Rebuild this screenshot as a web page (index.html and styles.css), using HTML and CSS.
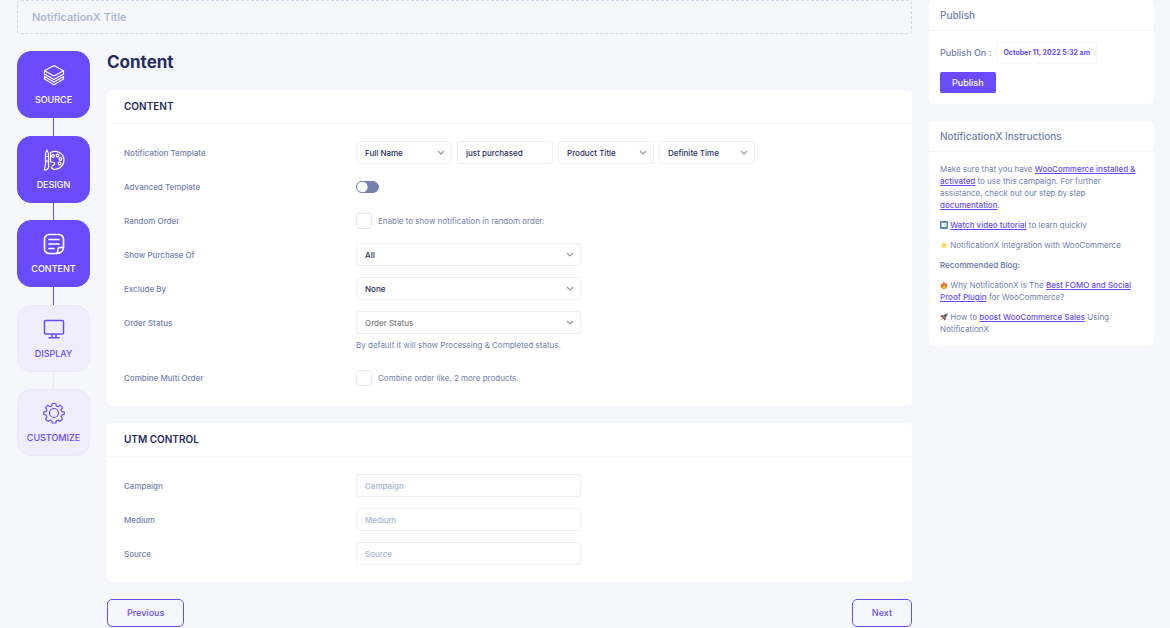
FILE: index.html
```html
<!DOCTYPE html>
<html lang="en">
<head>
<meta charset="utf-8">
<title>NotificationX</title>
<meta name="viewport" content="width=device-width, initial-scale=1">
<link rel="stylesheet" href="styles.css">
</head>
<body>
<div class="page">
  <main class="main">
    <input class="title-input" type="text" placeholder="NotificationX Title" aria-label="NotificationX Title">
    <div class="builder">
      <nav class="steps" aria-label="Steps">
        <button class="step done" type="button">
          <svg class="step-icon" viewBox="0 0 22 22"><path d="M11 1.500 20.500 6.800 11 12 1.500 6.800Z"/><path d="M1.500 6.800v3.200L11 15.500l9.500-5.500v-3.200M1.500 10v1M1.500 12.500 11 18l9.500-5.500M1.500 12.500v2.600L11 20.700l9.500-5.600v-2.600"/></svg>
          <span>SOURCE</span>
        </button>
        <span class="link done"></span>
        <button class="step done" type="button">
          <svg class="step-icon" viewBox="0 0 22 22"><path d="M4 1C2.500 3 2.300 5 2.500 7.500h3C5.700 5 5.300 3 4 1ZM2.500 7.500h3V12h-3ZM2.800 12h2.400l.5 5c.3 2.500-1.500 4-4.700 4 1-1 1-2.500 1.200-4Z"/><path d="M7.500 3.500C14 .5 21 4.500 21 11c0 5.500-4.500 9.500-9.500 9.300-2 0-3-.8-2.800-2.300.3-2 3.300-1.500 3-3.500-.2-1.800-2.200-1.500-4.200-1.500Z"/><circle cx="10" cy="7" r="1.300"/><circle cx="14.500" cy="6.500" r="1.300"/><circle cx="17.500" cy="10" r="1.300"/><circle cx="16.500" cy="14.500" r="1.300"/></svg>
          <span>DESIGN</span>
        </button>
        <span class="link done"></span>
        <button class="step done" type="button" aria-current="step">
          <svg class="step-icon bold" viewBox="0 0 22 22"><path d="M13.500 20.500H6a4.500 4.500 0 0 1-4.500-4.500V6A4.500 4.500 0 0 1 6 1.500h10A4.500 4.500 0 0 1 20.500 6v8.500c0 3.500-3 6-7 6ZM14 20.300c1.300-1.300 0-4.800 2-5.600 1.500-.6 3 .3 4.400-.6M6 6.500h10M6 11h10M6 15.500h5"/></svg>
          <span>CONTENT</span>
        </button>
        <span class="link done"></span>
        <button class="step" type="button">
          <svg class="step-icon medium" viewBox="0 0 22 22"><path d="M2.500 2.500h17a1 1 0 0 1 1 1v11.500a1 1 0 0 1-1 1h-17a1 1 0 0 1-1-1V3.500a1 1 0 0 1 1-1ZM9 16v3.500M13 16v3.500M6 19.700h10"/></svg>
          <span>DISPLAY</span>
        </button>
        <span class="link"></span>
        <button class="step" type="button">
          <svg class="step-icon" viewBox="0 0 22 22"><circle cx="11" cy="11" r="4.500"/><path d="M9.200 1.500h3.600l.5 2.500 1.600.7 2.200-1.500 2.400 2.400-1.400 2.200.7 1.700 2.400.4v2.600l-2.400.6-.7 1.700 1.400 2.200-2.400 2.400-2.200-1.400-1.600.7-.5 2.300H9.200l-.5-2.300-1.600-.7-2.200 1.400-2.400-2.400 1.400-2.200-.7-1.700-2.400-.6V9.900l2.400-.4.7-1.700-1.400-2.200 2.400-2.400 2.200 1.500L8.700 4Z"/></svg>
          <span>CUSTOMIZE</span>
        </button>
      </nav>

      <form class="panel">
        <h1>Content</h1>
        <section class="card">
          <h2>CONTENT</h2>
          <div class="fields">
            <div class="row">
              <label for="template">Notification Template</label>
              <div class="inline">
                <select id="template"><option>Full Name</option></select>
                <input type="text" value="just purchased" aria-label="Action text">
                <select aria-label="Product"><option>Product Title</option></select>
                <select aria-label="Time"><option>Definite Time</option></select>
              </div>
            </div>
            <div class="row">
              <label for="advanced">Advanced Template</label>
              <input class="switch" id="advanced" type="checkbox" role="switch">
            </div>
            <div class="row">
              <span>Random Order</span>
              <label class="check"><input type="checkbox"> Enable to show notification in random order.</label>
            </div>
            <div class="row">
              <label for="purchase">Show Purchase Of</label>
              <select id="purchase"><option>All</option></select>
            </div>
            <div class="row">
              <label for="exclude">Exclude By</label>
              <select id="exclude"><option>None</option></select>
            </div>
            <div class="row">
              <label for="status">Order Status</label>
              <select class="empty" id="status" aria-describedby="status-hint"><option>Order Status</option></select>
              <p class="hint" id="status-hint">By default it will show Processing &amp; Completed status.</p>
            </div>
            <div class="row">
              <span>Combine Multi Order</span>
              <label class="check"><input type="checkbox"> Combine order like, 2 more products.</label>
            </div>
          </div>
        </section>

        <section class="card">
          <h2>UTM CONTROL</h2>
          <div class="fields">
            <div class="row">
              <label for="campaign">Campaign</label>
              <input id="campaign" type="text" placeholder="Campaign">
            </div>
            <div class="row">
              <label for="medium">Medium</label>
              <input id="medium" type="text" placeholder="Medium">
            </div>
            <div class="row">
              <label for="source">Source</label>
              <input id="source" type="text" placeholder="Source">
            </div>
          </div>
        </section>

        <div class="pager">
          <button class="outline" type="button">Previous</button>
          <button class="outline" type="button">Next</button>
        </div>
      </form>
    </div>
  </main>

  <aside class="sidebar">
    <section class="card side">
      <h2>Publish</h2>
      <div class="publish">
        <div class="publish-on">Publish On : <button class="date" type="button">October 11, 2022 5:32 am</button></div>
        <button class="primary" type="button">Publish</button>
      </div>
    </section>
    <section class="card side">
      <h2>NotificationX Instructions</h2>
      <div class="help">
        <p>Make sure that you have <a href="#">WooCommerce installed &amp; activated</a> to use this campaign. For further assistance, check out our step by step <a href="#">documentation</a>.</p>
        <p><svg class="emoji" viewBox="0 0 16 16"><rect width="16" height="16" rx="2" fill="#5b8ba5"/><rect x="3" y="4" width="10" height="8" rx="1" fill="#eaf4f9"/><path d="M5 2v3M8 6l3 2-3 2Z" fill="#5b8ba5" stroke="#fff"/></svg> <a href="#">Watch video tutorial</a> to learn quickly</p>
        <p><svg class="emoji" viewBox="0 0 16 16"><path d="m8 .5 2.200 5 5.300.5-4 3.700 1.200 5.500L8 12.400l-4.700 2.800 1.200-5.500L.5 6l5.300-.5Z" fill="#fbd85c"/></svg> NotificationX Integration with WooCommerce</p>
        <p><strong>Recommended Blog:</strong></p>
        <p><svg class="emoji" viewBox="0 0 16 16"><path d="M7 0c1 3 3.500 3.500 4 6 .8-.5 1-1.500.9-2.500C14 5.500 14.500 8 14.300 10c-.3 3.600-3 6-6.300 6s-6.200-2.400-6.300-6C1.600 7.500 3 6 3.500 4c.7.700 1 1.500 1.200 2.500C6.500 5 7.500 2.500 7 0Z" fill="#f36c21"/><path d="M8 7c.3 2 3.300 3 3 5.800C10.800 14.700 9.500 15.500 8 15.500s-3-.9-3-2.800c0-1.500 1-2.200 1.200-3.200.5.300.8.700.9 1.300C7.900 9.700 8.200 8.500 8 7Z" fill="#fdc63b"/></svg> Why NotificationX is The <a href="#">Best FOMO and Social Proof Plugin</a> for WooCommerce?</p>
        <p><svg class="emoji" viewBox="0 0 16 16"><path d="M7 4 3 4.500.5 8l4 .5ZM12 9l-.5 4L8 15.500l-.5-4Z" fill="#c0392f"/><path d="M15.500.5C11 .5 6 3.500 3.500 9.500l3 3C12.500 10 15.500 5 15.500.5Z" fill="#6d7c87"/><circle cx="10.500" cy="5.500" r="1.700" fill="#2f4759"/><path d="M3.500 10.500 1 15l4.500-2.500Z" fill="#f5a623"/></svg> How to <a href="#">boost WooCommerce Sales</a> Using NotificationX</p>
      </div>
    </section>
  </aside>
</div>
</body>
</html>
```
FILE: styles.css
```css
:root {
  --violet: #6a4bff;
  --navy: #272c61;
  --slate: #7481b0;
  --line: #f3f5fa;
  --page: #f6f7fd;
}

* { box-sizing: border-box; }

body {
  margin: 0;
  background: var(--page);
  color: var(--slate);
  font: 500 8px/12px Inter, "Liberation Sans", sans-serif;
}

h1, h2, p { margin: 0; }
input, select, button { font: inherit; color: inherit; }
button { cursor: pointer; }
a { color: var(--violet); font-weight: 500; }

.page {
  display: grid;
  grid-template-columns: minmax(0, 1fr) 225px;
  gap: 17px;
  padding: 0 16px 0 17px;
}

.title-input {
  display: block;
  width: 100%;
  height: 34px;
  padding: 0 14px;
  border: 1px dashed #d3d9ed;
  border-radius: 4px;
  background: transparent;
  font-size: 11px;
}
.title-input::placeholder { color: #a6b3d4; opacity: 1; }

.builder {
  display: flex;
  align-items: flex-start;
  gap: 17px;
  padding-top: 17px;
}

.steps {
  display: flex;
  flex: none;
  flex-direction: column;
  align-items: center;
  width: 73px;
  height: 405px;
}
.step {
  display: flex;
  flex: none;
  flex-direction: column;
  align-items: center;
  justify-content: center;
  gap: 8px;
  width: 100%;
  height: 67px;
  padding: 1px 0 0;
  border: 1px solid #ebe8fd;
  border-radius: 14px;
  background: #f0eefe;
  color: var(--violet);
  font-size: 9px;
  line-height: 12px;
}
.step.done { border-color: var(--violet); background: var(--violet); color: #fff; }
.step-icon {
  width: 22px;
  height: 22px;
  fill: none;
  stroke: currentColor;
  stroke-width: 1.2;
  stroke-linejoin: round;
  stroke-linecap: round;
}
.step-icon.medium { stroke-width: 1.5; }
.step-icon.bold { stroke-width: 1.7; }
.link { flex: 1; width: 1px; background: #ebe8fd; }
.link.done { background: var(--violet); }

.panel { flex: 1; min-width: 0; }
.panel h1 {
  margin-bottom: 17px;
  color: var(--navy);
  font-size: 17px;
  font-weight: 700;
  line-height: 22px;
}

.card { margin-bottom: 17px; border-radius: 5px; background: #fff; }
.card h2 {
  padding: 0 17px;
  border-bottom: 1px solid var(--line);
  color: var(--navy);
  font-size: 10px;
  font-weight: 600;
  line-height: 33px;
}

.fields { display: grid; gap: 11px; padding: 17px; }
.row {
  display: grid;
  grid-template-columns: 232px minmax(0, 1fr);
  align-items: center;
  min-height: 23px;
}
.inline { display: flex; gap: 5px; }

.row select, .row input[type="text"] {
  width: 225px;
  height: 23px;
  padding: 0 8px;
  border: 1px solid #eef0f8;
  border-radius: 3px;
  background: #fff;
  color: var(--navy);
}
.row .inline select, .row .inline input[type="text"] { width: 96px; }
.row select {
  appearance: none;
  background: #fff url("data:image/svg+xml,%3Csvg xmlns='http://www.w3.org/2000/svg' viewBox='0 0 8 5'%3E%3Cpath d='M1 1l3 3 3-3' fill='none' stroke='%23999' stroke-width='1.100'/%3E%3C/svg%3E") no-repeat right 6px center / 8px 5px;
}
.row select.empty { color: #808080; }
.row input::placeholder { color: #a6b3d4; opacity: 1; }

.switch {
  appearance: none;
  width: 23px;
  height: 12px;
  margin: 0;
  border: 1px solid var(--slate);
  border-radius: 6px;
  background: radial-gradient(circle at 5px 5px, #fff 5px, var(--slate) 6px);
}
.check { display: flex; align-items: center; gap: 6px; font-weight: 400; }
.check input {
  appearance: none;
  width: 16px;
  height: 16px;
  margin: 0;
  border: 1px solid #e4e8f2;
  border-radius: 3px;
  background: #fff;
}
.hint { grid-column: 2; padding: 5px 0 4px; font-weight: 400; }

.pager { display: flex; justify-content: space-between; }
.outline {
  height: 28px;
  padding: 0 19px;
  border: 1px solid var(--violet);
  border-radius: 5px;
  background: transparent;
  color: var(--violet);
  font-size: 9px;
  font-weight: 500;
}

.card.side h2 {
  padding: 0 11px;
  color: var(--slate);
  font-weight: 500;
  line-height: 30px;
}
.publish { padding: 11px; font-size: 9px; }
.publish-on { display: flex; align-items: center; gap: 5px; margin-bottom: 8px; }
.date {
  height: 22px;
  padding: 0 6px;
  border: 1px solid var(--line);
  border-radius: 2px;
  background: #fff;
  color: var(--violet);
  font-size: 7px;
  font-weight: 700;
}
.primary {
  height: 21px;
  padding: 0 12px;
  border: 0;
  border-radius: 2px;
  background: var(--violet);
  color: #fff;
  font-weight: 500;
}
.help { display: grid; gap: 8px; padding: 11px; font-weight: 400; }
.help strong { font-weight: 600; }
.emoji { width: 8px; height: 8px; vertical-align: -1px; }
```
